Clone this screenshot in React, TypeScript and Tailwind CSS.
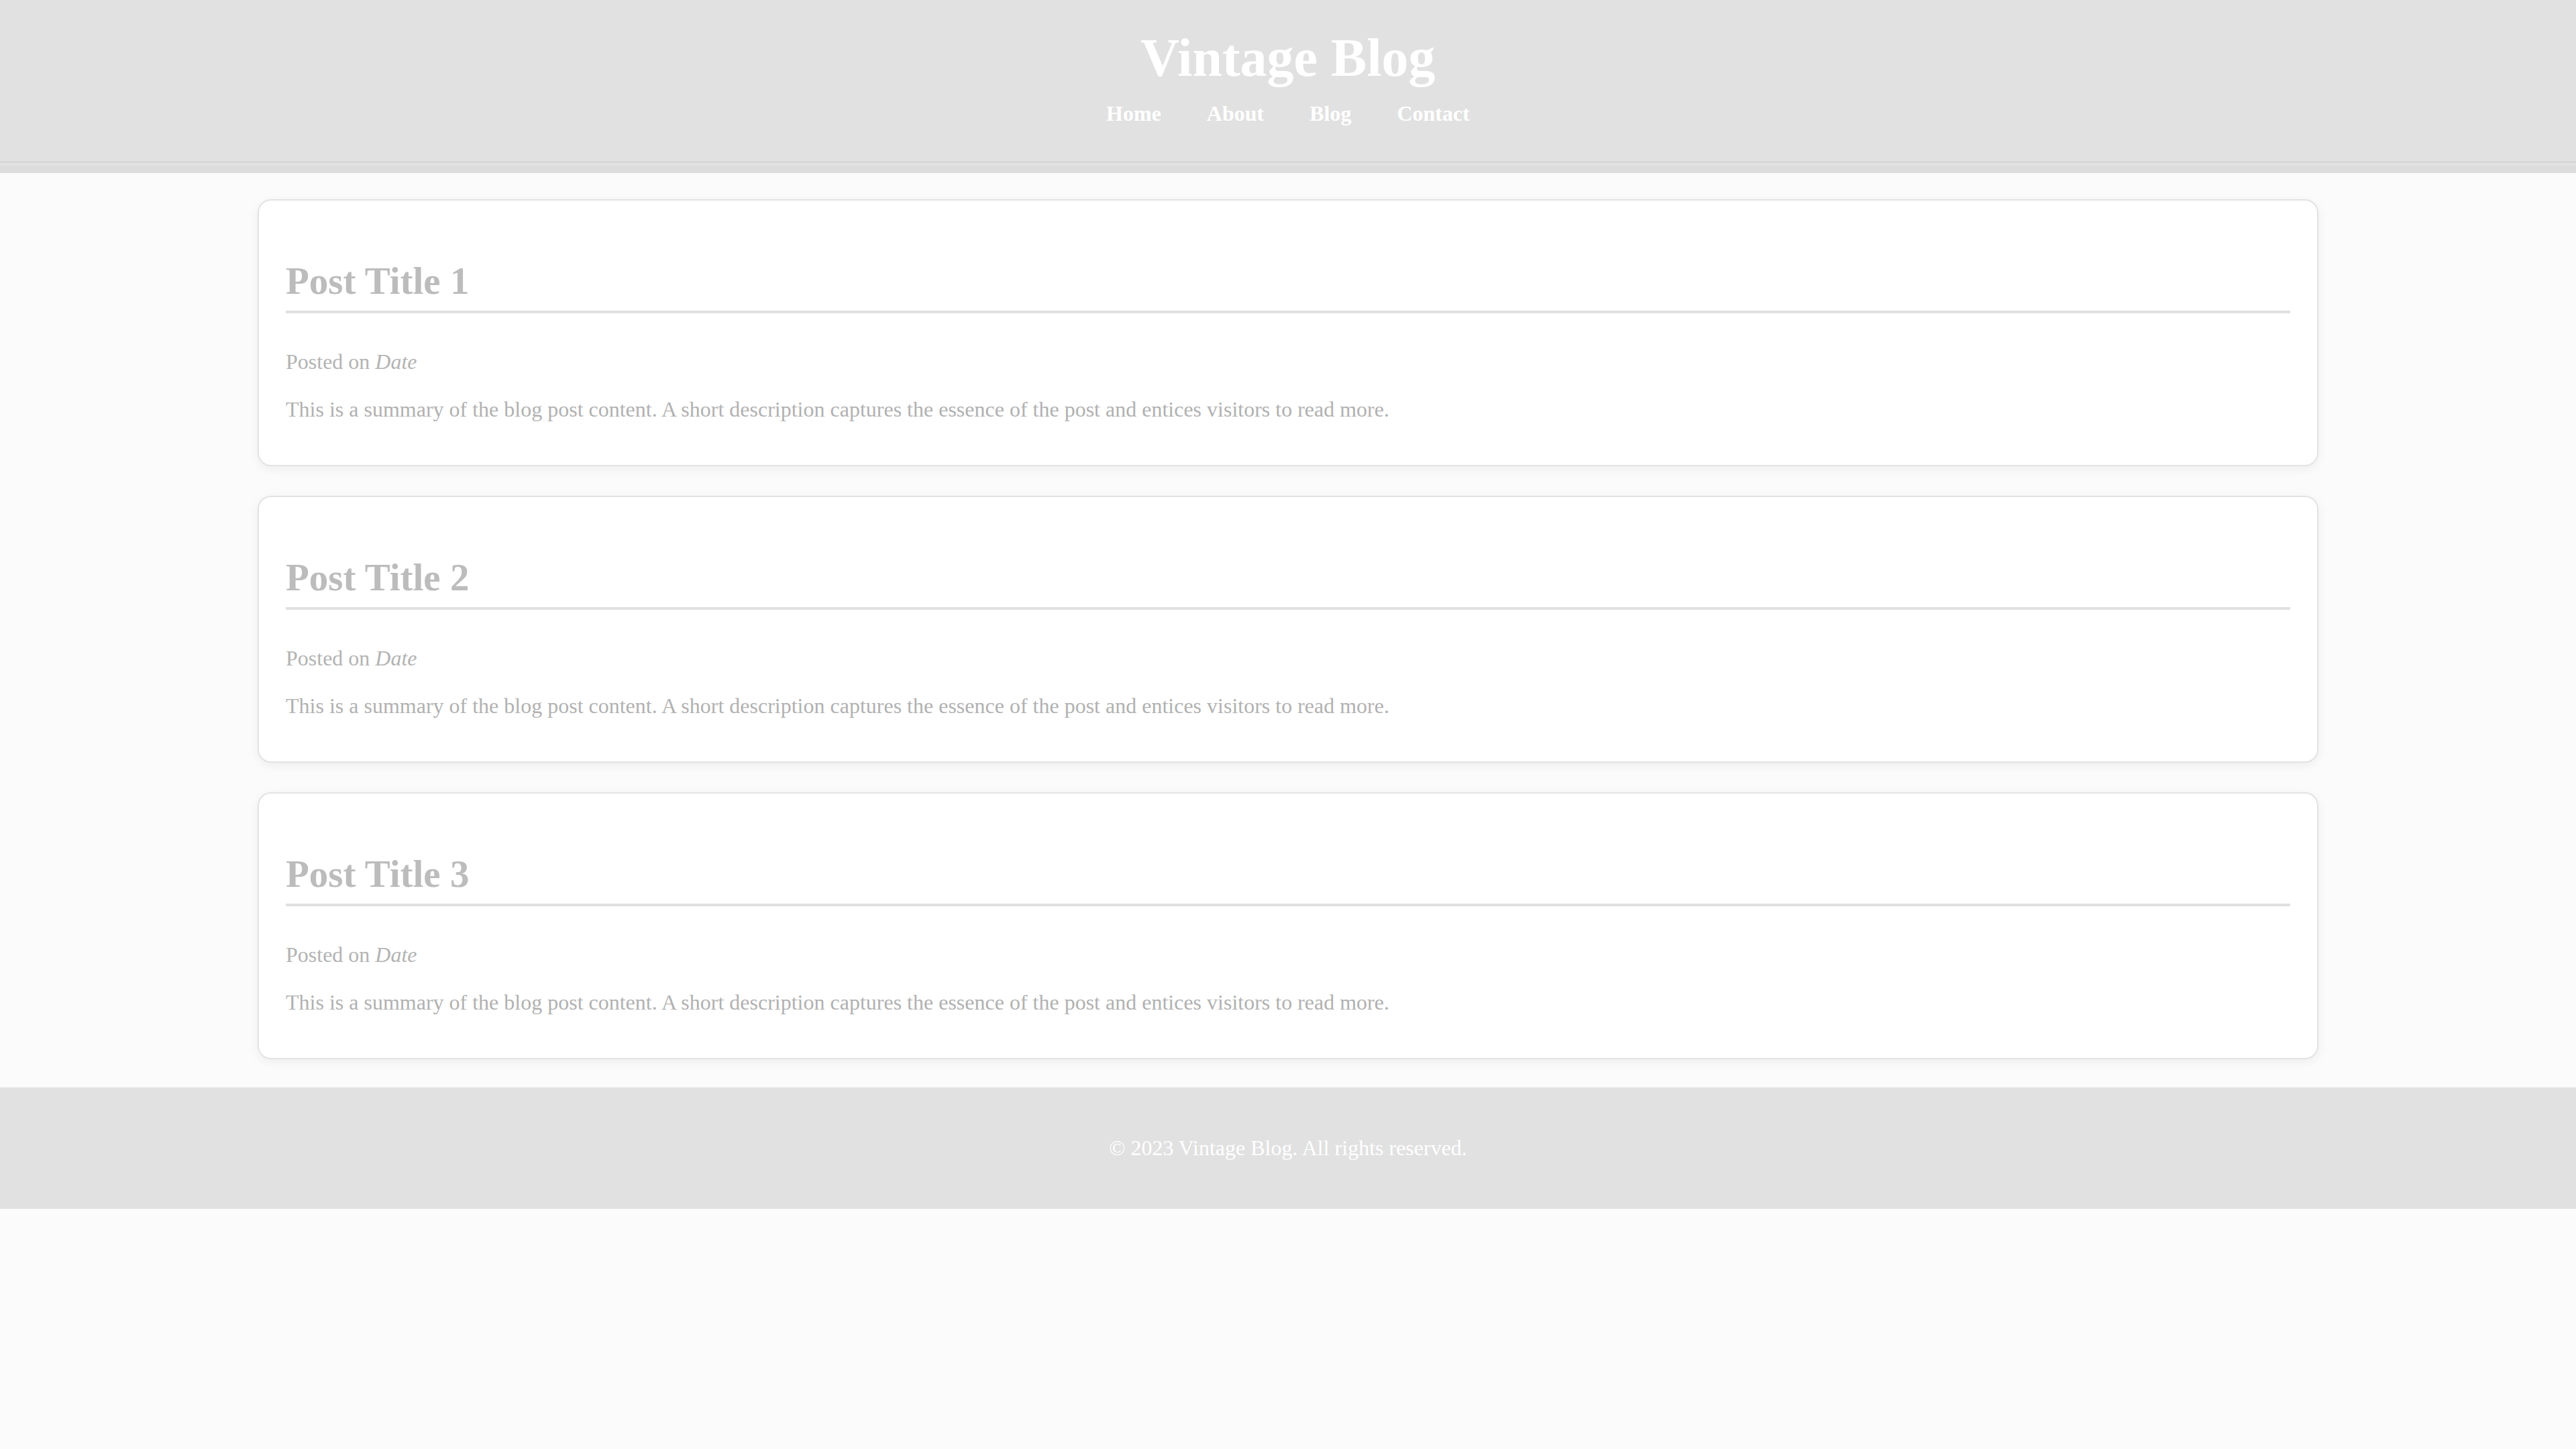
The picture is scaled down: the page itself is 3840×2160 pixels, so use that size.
export default function App() {
  const posts = [1, 2, 3];

  return (
    <div className="min-h-screen bg-[#fbfbfb] font-['Liberation_Serif','Times_New_Roman',serif]">
      {/* Header */}
      <header className="bg-[#e1e1e1] border-b-[10px] border-[#dcdcdc]">
        <div className="flex flex-col items-center pt-[42px] pb-[54px] mb-[6px] border-b border-[#c9c9c9]">
          <h1 className="text-[80px] leading-[88px] font-bold text-white">Vintage Blog</h1>
          <nav className="mt-[21px] flex gap-[68px] text-[32px] leading-[36px] font-bold text-white">
            <a href="#">Home</a>
            <a href="#">About</a>
            <a href="#">Blog</a>
            <a href="#">Contact</a>
          </nav>
        </div>
      </header>

      {/* Posts */}
      <main className="w-[80%] mx-auto pt-[39px] pb-[42px] flex flex-col gap-[44px]">
        {posts.map((n) => (
          <article
            key={n}
            className="bg-white border-2 border-[#e3e3e3] rounded-[20px] shadow-[0_4px_16px_rgba(0,0,0,0.06)] px-[40px] pt-[89px] pb-[65px]"
          >
            <h2 className="text-[57px] leading-[62px] font-bold text-[#bcbcbc] pb-[13px] border-b-4 border-[#e0e0e0]">
              Post Title {n}
            </h2>
            <p className="mt-[54px] text-[32px] leading-[36px] text-[#b3b3b3]">
              Posted on <em>Date</em>
            </p>
            <p className="mt-[35px] text-[32px] leading-[36px] text-[#b1b1b1]">
              This is a summary of the blog post content. A short description captures the essence of the post and entices visitors to read more.
            </p>
          </article>
        ))}
      </main>

      {/* Footer */}
      <footer className="bg-[#e1e1e1] pt-[72px] pb-[73px] text-center">
        <p className="text-[32px] leading-[36px] text-white">© 2023 Vintage Blog. All rights reserved.</p>
      </footer>
    </div>
  );
}
